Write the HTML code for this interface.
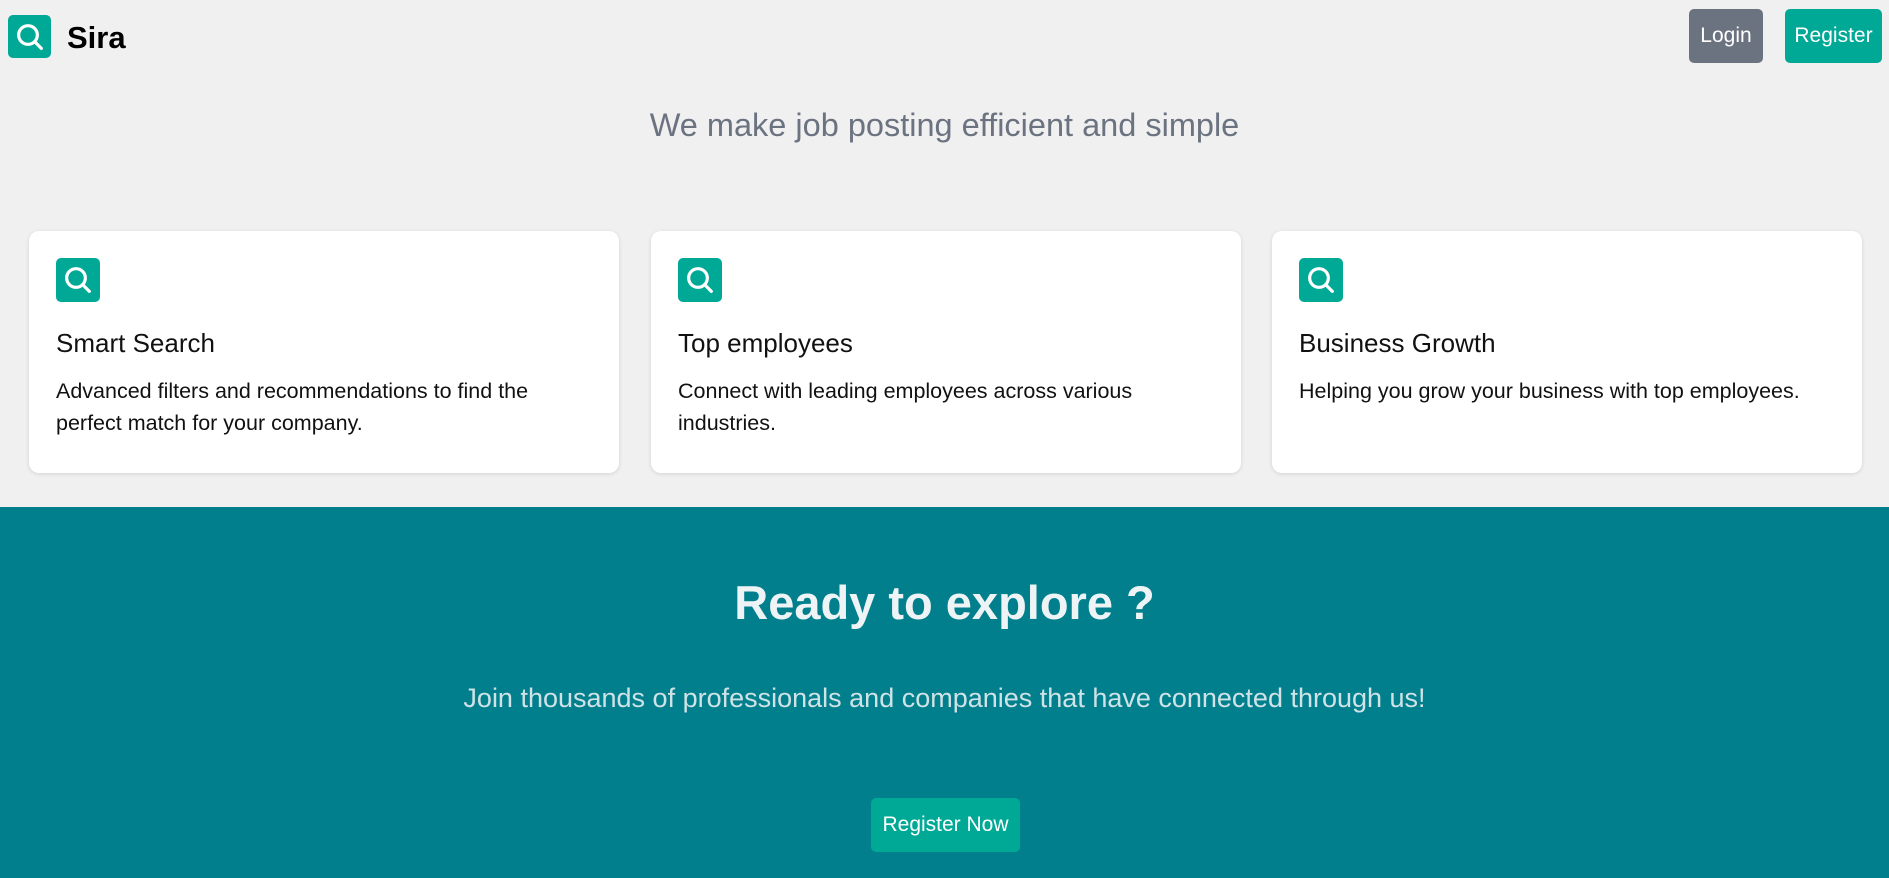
<!DOCTYPE html>
<html><head><meta charset="utf-8"><style>
*{margin:0;padding:0;box-sizing:border-box}
body{width:1889px;height:878px;overflow:hidden;background:#f0f0f0;font-family:"Liberation Sans",sans-serif;position:relative}
.ic{position:absolute;background:#00a896;border-radius:5px;display:flex;align-items:center;justify-content:center}
.btn{position:absolute;color:#fff;border-radius:5px;font-size:21px;display:flex;align-items:center;justify-content:center}
.card{position:absolute;top:231px;width:590px;height:242px;background:#fff;border-radius:10px;box-shadow:0 1px 4px rgba(0,0,0,.12)}
.card h3{position:absolute;left:27px;top:97px;font-weight:normal;font-size:26px;color:#111}
.card p{position:absolute;left:27px;top:144px;width:530px;font-size:21.5px;line-height:32px;color:#111}
.card .ic{left:27px;top:27px;width:44px;height:44px}
</style></head><body>
<div class="ic" style="left:8px;top:15px;width:43px;height:43px"><svg width="32" height="32" viewBox="0 0 24 24" fill="none" stroke="#fff" stroke-width="2.4" stroke-linecap="round"><circle cx="10.5" cy="10.5" r="7"/><path d="M15.5 15.5l5 5"/></svg></div>
<div style="position:absolute;left:67px;top:20px;font-size:31px;font-weight:bold;color:#000">Sira</div>
<div class="btn" style="left:1689px;top:9px;width:74px;height:54px;background:#6b7280">Login</div>
<div class="btn" style="left:1785px;top:9px;width:97px;height:54px;background:#00a896">Register</div>
<div style="position:absolute;left:0;width:1889px;top:107px;text-align:center;font-size:32.5px;color:#6b7280">We make job posting efficient and simple</div>
<div class="card" style="left:29px"><div class="ic"><svg width="32" height="32" viewBox="0 0 24 24" fill="none" stroke="#fff" stroke-width="2.4" stroke-linecap="round"><circle cx="10.5" cy="10.5" r="7"/><path d="M15.5 15.5l5 5"/></svg></div><h3>Smart Search</h3><p>Advanced filters and recommendations to find the perfect match for your company.</p></div>
<div class="card" style="left:651px"><div class="ic"><svg width="32" height="32" viewBox="0 0 24 24" fill="none" stroke="#fff" stroke-width="2.4" stroke-linecap="round"><circle cx="10.5" cy="10.5" r="7"/><path d="M15.5 15.5l5 5"/></svg></div><h3>Top employees</h3><p>Connect with leading employees across various industries.</p></div>
<div class="card" style="left:1272px"><div class="ic"><svg width="32" height="32" viewBox="0 0 24 24" fill="none" stroke="#fff" stroke-width="2.4" stroke-linecap="round"><circle cx="10.5" cy="10.5" r="7"/><path d="M15.5 15.5l5 5"/></svg></div><h3>Business Growth</h3><p>Helping you grow your business with top employees.</p></div>
<div style="position:absolute;left:0;top:507px;width:1889px;height:371px;background:#017f8d">
<div style="position:absolute;left:0;width:1889px;top:68px;text-align:center;font-size:47px;font-weight:bold;color:#eef4f5">Ready to explore ?</div>
<div style="position:absolute;left:0;width:1889px;top:176px;text-align:center;font-size:27px;color:#cfe3e6">Join thousands of professionals and companies that have connected through us!</div>
<div class="btn" style="left:871px;top:291px;width:149px;height:54px;background:#00a896">Register Now</div>
</div>
</body></html>
